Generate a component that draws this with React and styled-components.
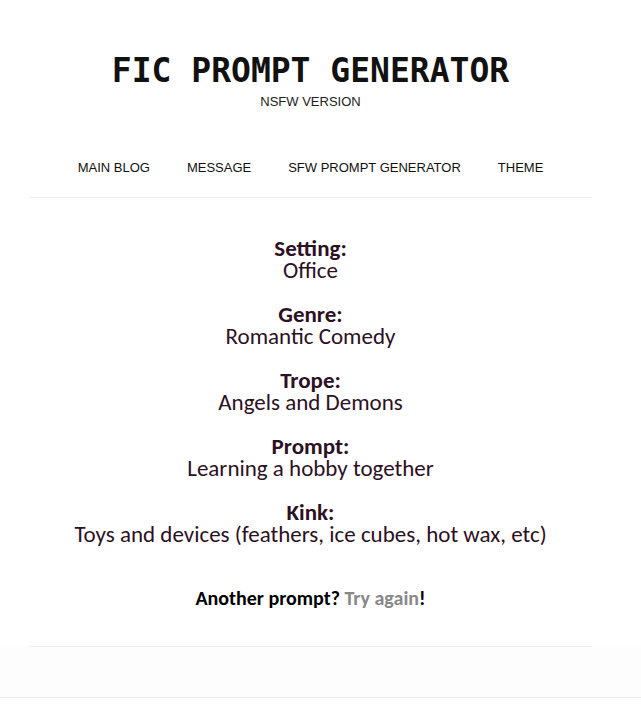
import React from "react";
import styled, { createGlobalStyle } from "styled-components";

const Global = createGlobalStyle`
  html, body { margin: 0; padding: 0; background: #fff; }
  body { font-family: "Liberation Sans", Arial, sans-serif; }
`;

const Page = styled.div`
  width: 621px;
`;

const Header = styled.header`
  display: flex;
  flex-direction: column;
  align-items: center;
  padding-top: 51px;
`;

const Title = styled.h1`
  margin: 0;
  font-family: "DejaVu Sans Mono", "Liberation Mono", monospace;
  font-weight: bold;
  font-size: 33px;
  line-height: 40px;
  color: #111;
`;

const Subtitle = styled.div`
  font-size: 13px;
  line-height: 15px;
  color: #222;
  margin-top: 3px;
`;

const Nav = styled.nav`
  margin: 51px 29px 0;
  display: flex;
  justify-content: center;
  padding-bottom: 22px;
  border-bottom: 1px solid #eeeeee;
`;

const NavItem = styled.a`
  font-size: 13px;
  line-height: 15px;
  color: #111;
  text-decoration: none;
  padding: 0 18.5px;
  text-transform: uppercase;
`;

const Main = styled.main`
  margin: 0 29px;
  padding-top: 39px;
  padding-bottom: 37px;
  border-bottom: 1px solid #eeeeee;
  display: flex;
  flex-direction: column;
  align-items: center;
  font-family: Carlito, Calibri, Lato, sans-serif;
  color: #2c1024;
`;

const Block = styled.div`
  text-align: center;
  font-size: 23px;
  line-height: 22px;
  margin-bottom: 22px;
`;

const Label = styled.div`
  font-weight: bold;
`;

const Value = styled.div``;

const Again = styled.div`
  margin-top: 20px;
  font-size: 20px;
  font-weight: bold;
  color: #000;
  line-height: 22px;
`;

const Link = styled.a`
  color: #888;
  text-decoration: none;
`;

const Footer = styled.div`
  width: 641px;
  height: 50px;
  background: #fdfdfd;
  border-bottom: 1px solid #eaeaea;
`;

const items = [
  ["Setting:", "Office"],
  ["Genre:", "Romantic Comedy"],
  ["Trope:", "Angels and Demons"],
  ["Prompt:", "Learning a hobby together"],
  ["Kink:", "Toys and devices (feathers, ice cubes, hot wax, etc)"],
];

export default function App() {
  return (
    <>
      <Global />
      <Page>
        <Header>
          <Title>FIC PROMPT GENERATOR</Title>
          <Subtitle>NSFW VERSION</Subtitle>
        </Header>
        <Nav>
          <NavItem href="#">Main Blog</NavItem>
          <NavItem href="#">Message</NavItem>
          <NavItem href="#">SFW Prompt Generator</NavItem>
          <NavItem href="#">Theme</NavItem>
        </Nav>
        <Main>
          {items.map(([l, v]) => (
            <Block key={l}>
              <Label>{l}</Label>
              <Value>{v}</Value>
            </Block>
          ))}
          <Again>
            Another prompt? <Link href="#">Try again</Link>!
          </Again>
        </Main>
      </Page>
      <Footer />
    </>
  );
}
